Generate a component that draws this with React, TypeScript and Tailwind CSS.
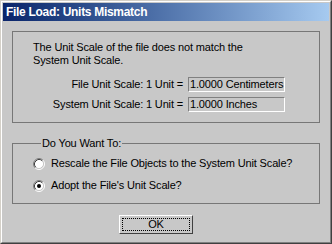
import React from "react";

const Radio = ({ checked }: { checked?: boolean }) => (
  <svg width="12" height="12" viewBox="0 0 12 12" className="shrink-0">
    <circle cx="6" cy="6" r="4.5" fill="#ffffff" />
    <path d="M2.11 9.89 A5.5 5.5 0 0 1 9.89 2.11" fill="none" stroke="#808080" strokeWidth="1" />
    <path d="M9.89 2.11 A5.5 5.5 0 0 1 2.11 9.89" fill="none" stroke="#ffffff" strokeWidth="1" />
    <path d="M2.82 9.18 A4.5 4.5 0 0 1 9.18 2.82" fill="none" stroke="#404040" strokeWidth="1" />
    <path d="M9.18 2.82 A4.5 4.5 0 0 1 2.82 9.18" fill="none" stroke="#c8c8c8" strokeWidth="1" />
    {checked && <circle cx="6" cy="6" r="2" fill="#000000" />}
  </svg>
);

const ScaleRow = ({ label, value }: { label: string; value: string }) => (
  <div className="flex items-center gap-[5px]">
    <span className="w-[170px] whitespace-nowrap text-right">{label}</span>
    <div className="flex h-[15px] w-[97px] items-center overflow-hidden whitespace-nowrap border border-t-[#808080] border-l-[#808080] border-b-white border-r-white pl-[1px]">
      {value}
    </div>
  </div>
);

export default function App() {
  return (
    <div
      className="h-[244px] w-[332px] border border-t-[#d4d0c8] border-l-[#d4d0c8] border-b-[#404040] border-r-[#404040] text-[11px] leading-[13px] tracking-[-0.15px] text-black"
      style={{ fontFamily: '"Liberation Sans", Arial, sans-serif' }}
    >
      <div className="flex h-full flex-col border border-t-white border-l-white border-b-[#808080] border-r-[#808080] bg-[#c8c8c8] p-[1px]">
        <div className="flex h-[18px] items-center bg-gradient-to-r from-[#0a246a] to-[#a6caf0] pl-[3px] text-[12px] font-bold tracking-[-0.3px] text-white">
          File Load: Units Mismatch
        </div>

        <div className="mx-[9px] mt-[10px] flex h-[92px] flex-col border border-[#777777] pl-[20px] pt-[9px]">
          <p>
            The Unit Scale of the file does not match the
            <br />
            System Unit Scale.
          </p>
          <div className="-ml-[20px] mt-[10px] flex flex-col gap-[5px]">
            <ScaleRow label="File Unit Scale: 1 Unit =" value="1.0000 Centimeters" />
            <ScaleRow label="System Unit Scale: 1 Unit =" value="1.0000 Inches" />
          </div>
        </div>

        <fieldset className="mx-[9px] mt-[14px] h-[67px] border border-[#777777] pl-[20px]">
          <legend className="ml-[8px] px-[1px]">Do You Want To:</legend>
          <div className="mt-[7px] flex flex-col gap-[9px]">
            <label className="flex items-center gap-[6px]">
              <Radio />
              <span>Rescale the File Objects to the System Unit Scale?</span>
            </label>
            <label className="flex items-center gap-[6px]">
              <Radio checked />
              <span>Adopt the File's Unit Scale?</span>
            </label>
          </div>
        </fieldset>

        <div className="ml-[116px] mt-[11px]">
          <button className="flex h-[19px] w-[74px] items-center justify-center border border-t-white border-l-white border-b-[#404040] border-r-[#404040] bg-[#c8c8c8] p-[2px]">
            <span className="flex h-full w-full items-center justify-center border border-dotted border-black">
              OK
            </span>
          </button>
        </div>
      </div>
    </div>
  );
}
